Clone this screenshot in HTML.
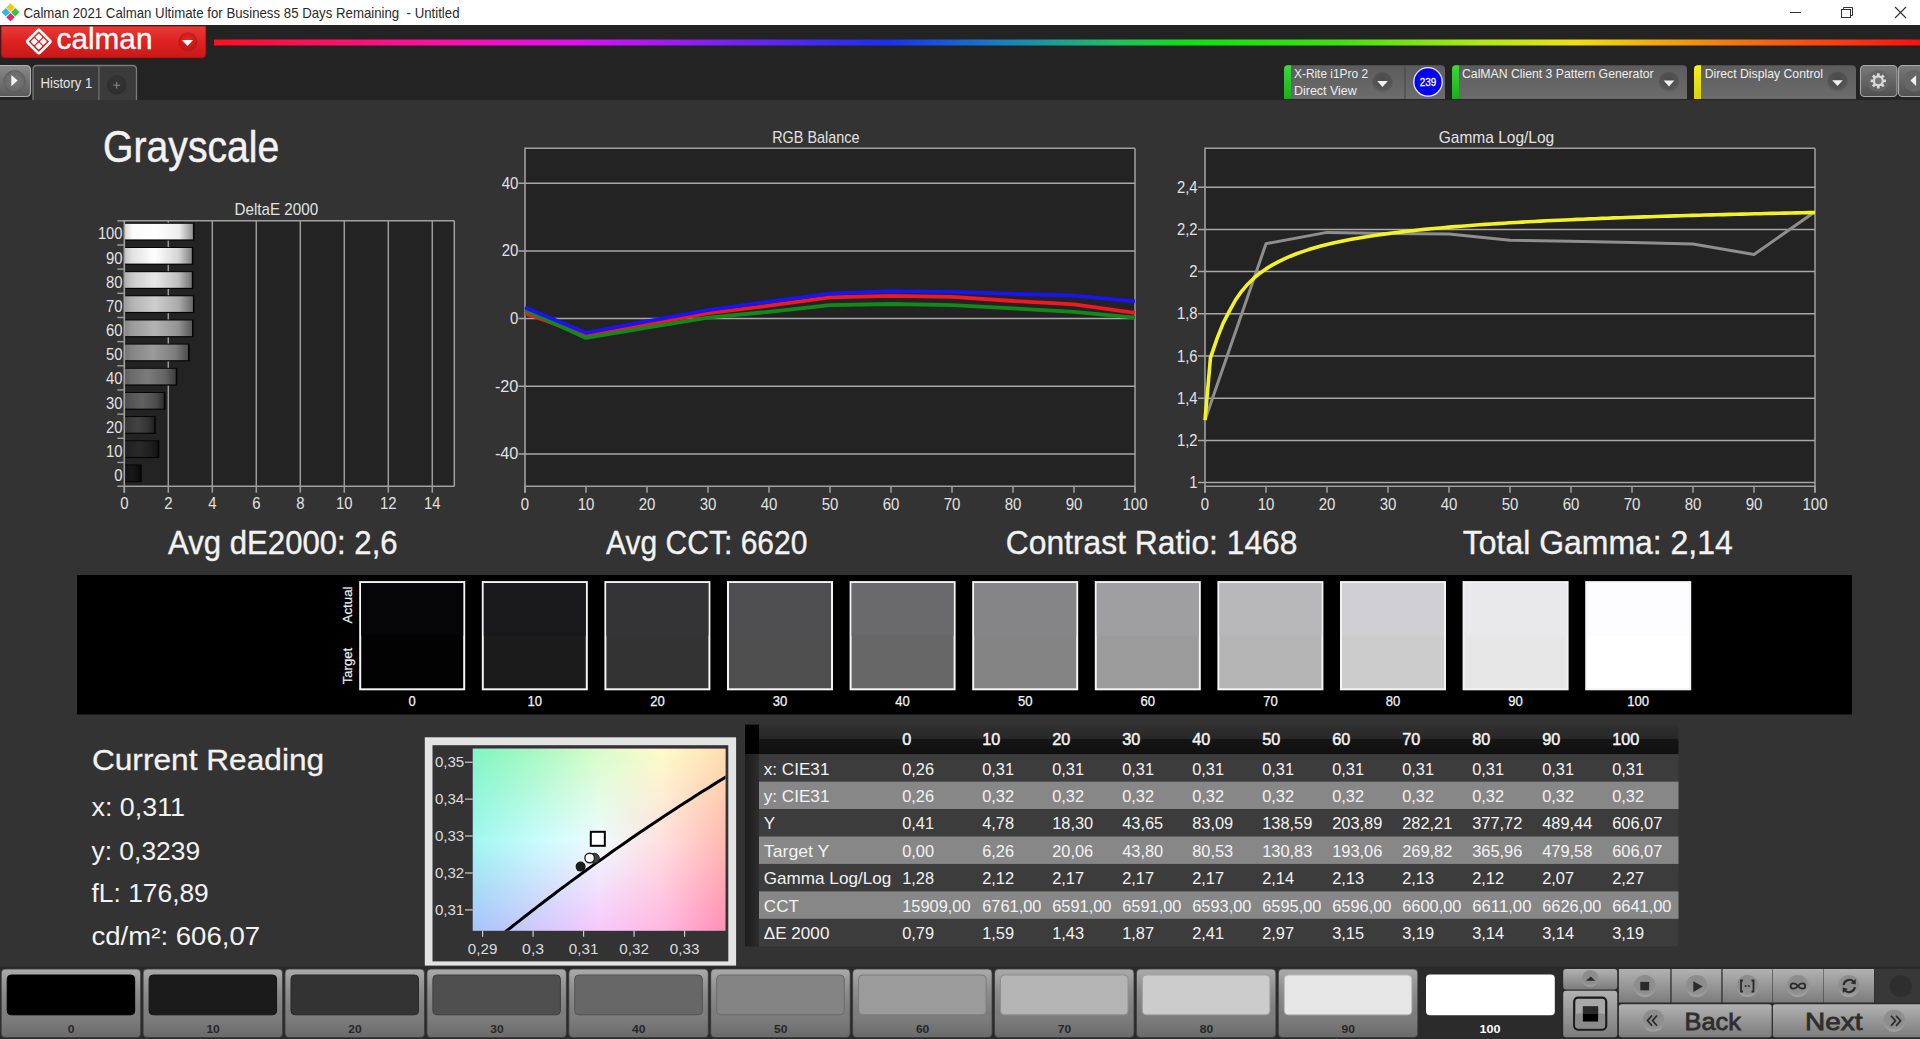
<!DOCTYPE html><html><head><meta charset="utf-8"><title>Calman Grayscale</title><style>html,body{margin:0;padding:0;background:#333;overflow:hidden;width:1920px;height:1039px;}svg{display:block;font-family:"Liberation Sans",sans-serif;}</style></head><body><svg width="1920" height="1039" viewBox="0 0 1920 1039" font-family="'Liberation Sans', sans-serif"><defs><linearGradient id="gRed" x1="0" y1="0" x2="0" y2="1"><stop offset="0" stop-color="#e83a36"/><stop offset="0.5" stop-color="#de2222"/><stop offset="1" stop-color="#c81818"/></linearGradient><radialGradient id="gRedBtn" cx="0.5" cy="0.4" r="0.6"><stop offset="0" stop-color="#e02a2a"/><stop offset="1" stop-color="#b81414"/></radialGradient><linearGradient id="gRain" x1="214" y1="0" x2="1920" y2="0" gradientUnits="userSpaceOnUse"><stop offset="0" stop-color="#ff1020"/><stop offset="0.126" stop-color="#ff10a0"/><stop offset="0.21" stop-color="#e010f0"/><stop offset="0.294" stop-color="#8020f0"/><stop offset="0.395" stop-color="#1830f0"/><stop offset="0.462" stop-color="#1880c0"/><stop offset="0.529" stop-color="#20c060"/><stop offset="0.573" stop-color="#10e010"/><stop offset="0.66" stop-color="#40e010"/><stop offset="0.743" stop-color="#b0e818"/><stop offset="0.798" stop-color="#f0e010"/><stop offset="0.882" stop-color="#f08010"/><stop offset="1" stop-color="#ff1010"/></linearGradient><linearGradient id="gPlay" x1="0" y1="0" x2="0" y2="1"><stop offset="0" stop-color="#8a8a8a"/><stop offset="1" stop-color="#5a5a5a"/></linearGradient><radialGradient id="gPlayC" cx="0.5" cy="0.5" r="0.5"><stop offset="0" stop-color="#7a7a7a"/><stop offset="0.85" stop-color="#6a6a6a"/><stop offset="1" stop-color="#5a5a5a"/></radialGradient><radialGradient id="gPlus" cx="0.5" cy="0.4" r="0.55"><stop offset="0" stop-color="#363636"/><stop offset="1" stop-color="#2e2e2e"/></radialGradient><linearGradient id="gBox" x1="0" y1="0" x2="0" y2="1"><stop offset="0" stop-color="#5c5c5c"/><stop offset="1" stop-color="#6c6c6c"/></linearGradient><linearGradient id="gGreen" x1="0" y1="0" x2="0" y2="1"><stop offset="0" stop-color="#3ad83a"/><stop offset="1" stop-color="#18b018"/></linearGradient><linearGradient id="gYel" x1="0" y1="0" x2="0" y2="1"><stop offset="0" stop-color="#f4f020"/><stop offset="1" stop-color="#d8d010"/></linearGradient><radialGradient id="gDrop" cx="0.5" cy="0.35" r="0.6"><stop offset="0" stop-color="#4a4a4a"/><stop offset="0.8" stop-color="#555"/><stop offset="1" stop-color="#626262"/></radialGradient><linearGradient id="gGearB" x1="0" y1="0" x2="0" y2="1"><stop offset="0" stop-color="#7a7a7a"/><stop offset="1" stop-color="#505050"/></linearGradient><linearGradient id="gBar0" x1="0" y1="0" x2="1" y2="0"><stop offset="0" stop-color="#141414"/><stop offset="0.12" stop-color="#131313"/><stop offset="0.45" stop-color="#191919"/><stop offset="0.8" stop-color="#111111"/><stop offset="1" stop-color="#0b0b0b"/></linearGradient><linearGradient id="gBar1" x1="0" y1="0" x2="1" y2="0"><stop offset="0" stop-color="#202020"/><stop offset="0.12" stop-color="#222222"/><stop offset="0.45" stop-color="#292929"/><stop offset="0.8" stop-color="#1e1e1e"/><stop offset="1" stop-color="#131313"/></linearGradient><linearGradient id="gBar2" x1="0" y1="0" x2="1" y2="0"><stop offset="0" stop-color="#333333"/><stop offset="0.12" stop-color="#383838"/><stop offset="0.45" stop-color="#434343"/><stop offset="0.8" stop-color="#343434"/><stop offset="1" stop-color="#202020"/></linearGradient><linearGradient id="gBar3" x1="0" y1="0" x2="1" y2="0"><stop offset="0" stop-color="#494949"/><stop offset="0.12" stop-color="#535353"/><stop offset="0.45" stop-color="#616161"/><stop offset="0.8" stop-color="#4d4d4d"/><stop offset="1" stop-color="#2f2f2f"/></linearGradient><linearGradient id="gBar4" x1="0" y1="0" x2="1" y2="0"><stop offset="0" stop-color="#5c5c5c"/><stop offset="0.12" stop-color="#6a6a6a"/><stop offset="0.45" stop-color="#7b7b7b"/><stop offset="0.8" stop-color="#636363"/><stop offset="1" stop-color="#3d3d3d"/></linearGradient><linearGradient id="gBar5" x1="0" y1="0" x2="1" y2="0"><stop offset="0" stop-color="#747474"/><stop offset="0.12" stop-color="#858585"/><stop offset="0.45" stop-color="#9b9b9b"/><stop offset="0.8" stop-color="#7d7d7d"/><stop offset="1" stop-color="#4d4d4d"/></linearGradient><linearGradient id="gBar6" x1="0" y1="0" x2="1" y2="0"><stop offset="0" stop-color="#868686"/><stop offset="0.12" stop-color="#9b9b9b"/><stop offset="0.45" stop-color="#b3b3b3"/><stop offset="0.8" stop-color="#929292"/><stop offset="1" stop-color="#595959"/></linearGradient><linearGradient id="gBar7" x1="0" y1="0" x2="1" y2="0"><stop offset="0" stop-color="#9a9a9a"/><stop offset="0.12" stop-color="#b3b3b3"/><stop offset="0.45" stop-color="#cecece"/><stop offset="0.8" stop-color="#a8a8a8"/><stop offset="1" stop-color="#676767"/></linearGradient><linearGradient id="gBar8" x1="0" y1="0" x2="1" y2="0"><stop offset="0" stop-color="#adadad"/><stop offset="0.12" stop-color="#cacaca"/><stop offset="0.45" stop-color="#e8e8e8"/><stop offset="0.8" stop-color="#bebebe"/><stop offset="1" stop-color="#747474"/></linearGradient><linearGradient id="gBar9" x1="0" y1="0" x2="1" y2="0"><stop offset="0" stop-color="#c2c2c2"/><stop offset="0.12" stop-color="#e2e2e2"/><stop offset="0.45" stop-color="#ffffff"/><stop offset="0.8" stop-color="#d5d5d5"/><stop offset="1" stop-color="#828282"/></linearGradient><linearGradient id="gBar10" x1="0" y1="0" x2="1" y2="0"><stop offset="0" stop-color="#d6d6d6"/><stop offset="0.12" stop-color="#fafafa"/><stop offset="0.45" stop-color="#ffffff"/><stop offset="0.8" stop-color="#ececec"/><stop offset="1" stop-color="#909090"/></linearGradient><linearGradient id="cT" x1="0" y1="0" x2="1" y2="0"><stop offset="0.00" stop-color="#80f5c0"/><stop offset="0.25" stop-color="#a8f8c0"/><stop offset="0.50" stop-color="#d8fcc8"/><stop offset="0.75" stop-color="#fcfcc8"/><stop offset="1.00" stop-color="#fde0b0"/></linearGradient><linearGradient id="cM" x1="0" y1="0" x2="1" y2="0"><stop offset="0.00" stop-color="#a0f8f0"/><stop offset="0.25" stop-color="#c8fcfc"/><stop offset="0.50" stop-color="#eefcff"/><stop offset="0.75" stop-color="#ffe0e0"/><stop offset="1.00" stop-color="#ffb8b0"/></linearGradient><linearGradient id="cB" x1="0" y1="0" x2="1" y2="0"><stop offset="0.00" stop-color="#a8c4fc"/><stop offset="0.25" stop-color="#d0c8fc"/><stop offset="0.50" stop-color="#f8c8fc"/><stop offset="0.75" stop-color="#ffb8e0"/><stop offset="1.00" stop-color="#ff90b8"/></linearGradient><linearGradient id="mTop" x1="0" y1="0" x2="0" y2="1"><stop offset="0" stop-color="#fff"/><stop offset="0.5" stop-color="#000"/><stop offset="1" stop-color="#000"/></linearGradient><linearGradient id="mMid" x1="0" y1="0" x2="0" y2="1"><stop offset="0" stop-color="#fff"/><stop offset="0.5" stop-color="#fff"/><stop offset="1" stop-color="#000"/></linearGradient><mask id="mkTop" maskUnits="userSpaceOnUse" x="472.7" y="748.5" width="252.8" height="182.29999999999995"><rect x="472.7" y="748.5" width="252.8" height="182.29999999999995" fill="url(#mTop)"/></mask><mask id="mkMid" maskUnits="userSpaceOnUse" x="472.7" y="748.5" width="252.8" height="182.29999999999995"><rect x="472.7" y="748.5" width="252.8" height="182.29999999999995" fill="url(#mMid)"/></mask><clipPath id="cpCie"><rect x="472.7" y="748.5" width="252.8" height="182.29999999999995"/></clipPath><linearGradient id="gHdr" x1="0" y1="0" x2="0" y2="1"><stop offset="0" stop-color="#303030"/><stop offset="0.5" stop-color="#272727"/><stop offset="0.5" stop-color="#151515"/><stop offset="1" stop-color="#101010"/></linearGradient><linearGradient id="gRH" x1="0" y1="0" x2="1" y2="0"><stop offset="0" stop-color="#1c1c1c"/><stop offset="1" stop-color="#2c2c2c"/></linearGradient><linearGradient id="gBtn" x1="0" y1="0" x2="0" y2="1"><stop offset="0" stop-color="#ababab"/><stop offset="0.3" stop-color="#8e8e8e"/><stop offset="0.65" stop-color="#7c7c7c"/><stop offset="0.7" stop-color="#7e7e7e"/><stop offset="1" stop-color="#6a6a6a"/></linearGradient><linearGradient id="gCtl" x1="0" y1="0" x2="0" y2="1"><stop offset="0" stop-color="#b2b2b2"/><stop offset="1" stop-color="#7c7c7c"/></linearGradient><radialGradient id="gIco" cx="0.5" cy="0.35" r="0.65"><stop offset="0" stop-color="#8a8a8a"/><stop offset="0.75" stop-color="#8f8f8f"/><stop offset="1" stop-color="#a6a6a6"/></radialGradient></defs><rect x="0" y="0" width="1920" height="1039" fill="#333333"/>
<rect x="0" y="0" width="1920" height="25" fill="#ffffff"/>
<rect x="0" y="25" width="1920" height="75" fill="#232323"/>
<path d="M10.5 3.2 L14.8 7.5 L10.5 11.8 L6.2 7.5 Z" fill="#f5c518"/>
<path d="M5.8 8.0 L10.1 12.3 L5.8 16.6 L1.5 12.3 Z" fill="#2fb5e8"/>
<path d="M15.3 8.0 L19.6 12.3 L15.3 16.6 L11.0 12.3 Z" fill="#3cc43c"/>
<path d="M10.5 12.899999999999999 L14.8 17.2 L10.5 21.5 L6.2 17.2 Z" fill="#e0306a"/>
<text x="23.5" y="17.8" font-size="14.3" fill="#2a2a2a" textLength="436.0" lengthAdjust="spacingAndGlyphs">Calman 2021 Calman Ultimate for Business 85 Days Remaining&#160;&#160;- Untitled</text>
<line x1="1790" y1="12.5" x2="1801" y2="12.5" stroke="#333" stroke-width="1"/>
<rect x="1841.5" y="9.5" width="9" height="8" fill="none" stroke="#333" stroke-width="1"/>
<path d="M1843.5 9.5 V7.5 H1852.5 V15.5 H1850.5" fill="none" stroke="#333" stroke-width="1"/>
<line x1="1895" y1="7" x2="1906" y2="18" stroke="#333" stroke-width="1.1"/>
<line x1="1906" y1="7" x2="1895" y2="18" stroke="#333" stroke-width="1.1"/>
<path d="M1 26 H206 V54 Q206 58 202 58 H5 Q1 58 1 54 Z" fill="url(#gRed)" stroke="#7a1010" stroke-width="0.8"/>
<g transform="translate(38.8,41.6) rotate(45)"><rect x="-8.6" y="-8.6" width="17.2" height="17.2" rx="1.6" fill="none" stroke="#fff" stroke-width="2.6"/><rect x="-5.8" y="-5.8" width="5.2" height="5.2" rx="0.8" fill="#fff"/><rect x="0.6" y="-5.8" width="5.2" height="5.2" rx="0.8" fill="#fff"/><rect x="-5.8" y="0.6" width="5.2" height="5.2" rx="0.8" fill="#fff"/><rect x="0.6" y="0.6" width="5.2" height="5.2" rx="0.8" fill="#fff"/></g>
<text x="56.5" y="49.2" font-size="30" fill="#ffffff" textLength="96.0" lengthAdjust="spacingAndGlyphs" stroke="#fff" stroke-width="0.35">calman</text>
<circle cx="187.9" cy="41.8" r="9.5" fill="url(#gRedBtn)"/>
<path d="M182 40 H193 L187.5 46 Z" fill="#fff"/>
<rect x="214" y="39.5" width="1706" height="6" fill="url(#gRain)"/>
<path d="M-2 65.5 H26 Q30.5 65.5 30.5 70 V92 Q30.5 96.5 26 96.5 H-2 Z" fill="url(#gPlay)" stroke="#b0b0b0" stroke-width="1.2"/>
<circle cx="14.6" cy="81.2" r="11" fill="url(#gPlayC)"/>
<path d="M11.3 75 L17.6 80.6 L11.3 86.3 Z" fill="#f4f4f4"/>
<path d="M33 100 V69.5 Q33 65.5 37 65.5 H132.5 Q136.5 65.5 136.5 69.5 V100" fill="#3b3b3b" stroke="#7a7a7a" stroke-width="1.3"/>
<line x1="98.9" y1="66" x2="98.9" y2="100" stroke="#6e6e6e" stroke-width="1.3"/>
<circle cx="116.7" cy="84.8" r="9.8" fill="url(#gPlus)"/>
<line x1="113.4" y1="85.2" x2="120" y2="85.2" stroke="#8a8a8a" stroke-width="1"/>
<line x1="116.7" y1="81.9" x2="116.7" y2="88.5" stroke="#8a8a8a" stroke-width="1"/>
<text x="40.5" y="87.7" font-size="13.8" fill="#e6e6e6" textLength="51.8" lengthAdjust="spacingAndGlyphs">History 1</text>
<path d="M1284 99 V69.5 Q1284 65.3 1288 65.3 H1441 Q1445 65.3 1445 69.5 V99 Z" fill="url(#gBox)"/>
<path d="M1284 99 V69.5 Q1284 65.3 1288 65.3 H1291 V99 Z" fill="url(#gGreen)"/>
<line x1="1405" y1="67" x2="1405" y2="99" stroke="#4a4a4a" stroke-width="1.2"/>
<circle cx="1382.5" cy="82.5" r="10.2" fill="url(#gDrop)"/>
<path d="M1377.2 81.1 H1387.8 L1382.5 86.9 Z" fill="#f2f2f2"/>
<circle cx="1428" cy="81.9" r="14.2" fill="#0404f0" stroke="#e8e8ff" stroke-width="1.3"/>
<text x="1428.0" y="86.3" font-size="11.5" fill="#ffffff" text-anchor="middle" textLength="16.5" lengthAdjust="spacingAndGlyphs" stroke="#fff" stroke-width="0.3">239</text>
<text x="1294.0" y="78.2" font-size="12.2" fill="#eeeeee" textLength="74.0" lengthAdjust="spacingAndGlyphs">X-Rite i1Pro 2</text>
<text x="1294.0" y="94.9" font-size="12.2" fill="#eeeeee" textLength="62.8" lengthAdjust="spacingAndGlyphs">Direct View</text>
<path d="M1452 99 V69.5 Q1452 65.3 1456 65.3 H1683 Q1687 65.3 1687 69.5 V99 Z" fill="url(#gBox)"/>
<path d="M1452 99 V69.5 Q1452 65.3 1456 65.3 H1459 V99 Z" fill="url(#gGreen)"/>
<circle cx="1669" cy="82" r="10.2" fill="url(#gDrop)"/>
<path d="M1663.7 80.6 H1674.3 L1669 86.4 Z" fill="#f2f2f2"/>
<text x="1462.0" y="78.2" font-size="12.2" fill="#eeeeee" textLength="191.7" lengthAdjust="spacingAndGlyphs">CalMAN Client 3 Pattern Generator</text>
<path d="M1694 99 V69.5 Q1694 65.3 1698 65.3 H1852 Q1856 65.3 1856 69.5 V99 Z" fill="url(#gBox)"/>
<path d="M1694 99 V69.5 Q1694 65.3 1698 65.3 H1701 V99 Z" fill="url(#gYel)"/>
<circle cx="1837.5" cy="81.7" r="10.2" fill="url(#gDrop)"/>
<path d="M1832.2 80.3 H1842.8 L1837.5 86.10000000000001 Z" fill="#f2f2f2"/>
<text x="1704.7" y="78.3" font-size="12.2" fill="#eeeeee" textLength="118.3" lengthAdjust="spacingAndGlyphs">Direct Display Control</text>
<rect x="1860.5" y="65.5" width="36.5" height="31" rx="4" fill="url(#gGearB)" stroke="#a8a8a8" stroke-width="1.1"/>
<circle cx="1878.3" cy="80.9" r="10.9" fill="#666666"/>
<path d="M1883.71 79.46 L1885.99 79.58 L1885.99 82.22 L1883.71 82.34 L1883.14 83.71 L1884.67 85.40 L1882.80 87.27 L1881.11 85.74 L1879.74 86.31 L1879.62 88.59 L1876.98 88.59 L1876.86 86.31 L1875.49 85.74 L1873.80 87.27 L1871.93 85.40 L1873.46 83.71 L1872.89 82.34 L1870.61 82.22 L1870.61 79.58 L1872.89 79.46 L1873.46 78.09 L1871.93 76.40 L1873.80 74.53 L1875.49 76.06 L1876.86 75.49 L1876.98 73.21 L1879.62 73.21 L1879.74 75.49 L1881.11 76.06 L1882.80 74.53 L1884.67 76.40 L1883.14 78.09 Z" fill="#d8d8d8"/>
<circle cx="1878.3" cy="80.9" r="3.3" fill="#767676"/>
<rect x="1898.5" y="65.5" width="30" height="31" rx="4" fill="url(#gGearB)" stroke="#a8a8a8" stroke-width="1.1"/>
<circle cx="1914.5" cy="80.9" r="10.9" fill="#666666"/>
<path d="M1916.1 75.2 L1910.4 80.6 L1916.1 85.9 Z" fill="#f0f0f0"/>
<text x="103.1" y="162.3" font-size="43.6" fill="#f2f2f2" textLength="176.2" lengthAdjust="spacingAndGlyphs" stroke="#f2f2f2" stroke-width="0.5">Grayscale</text>
<rect x="124.3" y="220.8" width="330.0" height="265.4" fill="#232323"/>
<line x1="168.3" y1="220.8" x2="168.3" y2="486.2" stroke="#9a9a9a" stroke-width="1.5"/>
<line x1="212.3" y1="220.8" x2="212.3" y2="486.2" stroke="#9a9a9a" stroke-width="1.5"/>
<line x1="256.3" y1="220.8" x2="256.3" y2="486.2" stroke="#9a9a9a" stroke-width="1.5"/>
<line x1="300.3" y1="220.8" x2="300.3" y2="486.2" stroke="#9a9a9a" stroke-width="1.5"/>
<line x1="344.3" y1="220.8" x2="344.3" y2="486.2" stroke="#9a9a9a" stroke-width="1.5"/>
<line x1="388.3" y1="220.8" x2="388.3" y2="486.2" stroke="#9a9a9a" stroke-width="1.5"/>
<line x1="432.3" y1="220.8" x2="432.3" y2="486.2" stroke="#9a9a9a" stroke-width="1.5"/>
<text x="276.3" y="215.4" font-size="15.7" fill="#e2e2e2" text-anchor="middle" textLength="83.6" lengthAdjust="spacingAndGlyphs">DeltaE 2000</text>
<rect x="124.3" y="464.4" width="17.4" height="17.8" fill="#050505"/>
<rect x="124.3" y="465.4" width="15.8" height="15.6" fill="url(#gBar0)"/>
<text x="122.6" y="481.0" font-size="16" fill="#e2e2e2" text-anchor="end" textLength="8.3" lengthAdjust="spacingAndGlyphs">0</text>
<rect x="124.3" y="440.3" width="35.0" height="17.8" fill="#050505"/>
<rect x="124.3" y="441.3" width="33.4" height="15.6" fill="url(#gBar1)"/>
<text x="122.6" y="456.9" font-size="16" fill="#e2e2e2" text-anchor="end" textLength="16.5" lengthAdjust="spacingAndGlyphs">10</text>
<rect x="124.3" y="416.1" width="31.5" height="17.8" fill="#050505"/>
<rect x="124.3" y="417.1" width="29.9" height="15.6" fill="url(#gBar2)"/>
<text x="122.6" y="432.7" font-size="16" fill="#e2e2e2" text-anchor="end" textLength="16.5" lengthAdjust="spacingAndGlyphs">20</text>
<rect x="124.3" y="392.0" width="41.1" height="17.8" fill="#050505"/>
<rect x="124.3" y="393.0" width="39.5" height="15.6" fill="url(#gBar3)"/>
<text x="122.6" y="408.6" font-size="16" fill="#e2e2e2" text-anchor="end" textLength="16.5" lengthAdjust="spacingAndGlyphs">30</text>
<rect x="124.3" y="367.8" width="53.0" height="17.8" fill="#050505"/>
<rect x="124.3" y="368.8" width="51.4" height="15.6" fill="url(#gBar4)"/>
<text x="122.6" y="384.4" font-size="16" fill="#e2e2e2" text-anchor="end" textLength="16.5" lengthAdjust="spacingAndGlyphs">40</text>
<rect x="124.3" y="343.6" width="65.3" height="17.8" fill="#050505"/>
<rect x="124.3" y="344.6" width="63.7" height="15.6" fill="url(#gBar5)"/>
<text x="122.6" y="360.2" font-size="16" fill="#e2e2e2" text-anchor="end" textLength="16.5" lengthAdjust="spacingAndGlyphs">50</text>
<rect x="124.3" y="319.5" width="69.3" height="17.8" fill="#050505"/>
<rect x="124.3" y="320.5" width="67.7" height="15.6" fill="url(#gBar6)"/>
<text x="122.6" y="336.1" font-size="16" fill="#e2e2e2" text-anchor="end" textLength="16.5" lengthAdjust="spacingAndGlyphs">60</text>
<rect x="124.3" y="295.3" width="70.2" height="17.8" fill="#050505"/>
<rect x="124.3" y="296.3" width="68.6" height="15.6" fill="url(#gBar7)"/>
<text x="122.6" y="311.9" font-size="16" fill="#e2e2e2" text-anchor="end" textLength="16.5" lengthAdjust="spacingAndGlyphs">70</text>
<rect x="124.3" y="271.2" width="69.1" height="17.8" fill="#050505"/>
<rect x="124.3" y="272.2" width="67.5" height="15.6" fill="url(#gBar8)"/>
<text x="122.6" y="287.8" font-size="16" fill="#e2e2e2" text-anchor="end" textLength="16.5" lengthAdjust="spacingAndGlyphs">80</text>
<rect x="124.3" y="247.0" width="69.1" height="17.8" fill="#050505"/>
<rect x="124.3" y="248.0" width="67.5" height="15.6" fill="url(#gBar9)"/>
<text x="122.6" y="263.6" font-size="16" fill="#e2e2e2" text-anchor="end" textLength="16.5" lengthAdjust="spacingAndGlyphs">90</text>
<rect x="124.3" y="222.8" width="70.2" height="17.8" fill="#050505"/>
<rect x="124.3" y="223.8" width="68.6" height="15.6" fill="url(#gBar10)"/>
<text x="122.6" y="239.4" font-size="16" fill="#e2e2e2" text-anchor="end" textLength="24.7" lengthAdjust="spacingAndGlyphs">100</text>
<line x1="124.3" y1="220.8" x2="454.3" y2="220.8" stroke="#a0a0a0" stroke-width="1.5"/>
<line x1="454.3" y1="220.8" x2="454.3" y2="486.2" stroke="#a0a0a0" stroke-width="1.5"/>
<line x1="124.3" y1="220.10000000000002" x2="124.3" y2="492.7" stroke="#a0a0a0" stroke-width="1.6"/>
<line x1="117.3" y1="486.2" x2="454.3" y2="486.2" stroke="#a0a0a0" stroke-width="1.6"/>
<line x1="117.3" y1="220.84" x2="124.3" y2="220.84" stroke="#a0a0a0" stroke-width="1.4"/>
<line x1="117.3" y1="245.0" x2="124.3" y2="245.0" stroke="#a0a0a0" stroke-width="1.4"/>
<line x1="117.3" y1="269.16" x2="124.3" y2="269.16" stroke="#a0a0a0" stroke-width="1.4"/>
<line x1="117.3" y1="293.32" x2="124.3" y2="293.32" stroke="#a0a0a0" stroke-width="1.4"/>
<line x1="117.3" y1="317.48" x2="124.3" y2="317.48" stroke="#a0a0a0" stroke-width="1.4"/>
<line x1="117.3" y1="341.64" x2="124.3" y2="341.64" stroke="#a0a0a0" stroke-width="1.4"/>
<line x1="117.3" y1="365.8" x2="124.3" y2="365.8" stroke="#a0a0a0" stroke-width="1.4"/>
<line x1="117.3" y1="389.96000000000004" x2="124.3" y2="389.96000000000004" stroke="#a0a0a0" stroke-width="1.4"/>
<line x1="117.3" y1="414.12" x2="124.3" y2="414.12" stroke="#a0a0a0" stroke-width="1.4"/>
<line x1="117.3" y1="438.28" x2="124.3" y2="438.28" stroke="#a0a0a0" stroke-width="1.4"/>
<line x1="117.3" y1="462.44" x2="124.3" y2="462.44" stroke="#a0a0a0" stroke-width="1.4"/>
<line x1="124.3" y1="486.2" x2="124.3" y2="492.7" stroke="#a0a0a0" stroke-width="1.5"/>
<text x="124.3" y="509.4" font-size="16" fill="#e2e2e2" text-anchor="middle" textLength="8.3" lengthAdjust="spacingAndGlyphs">0</text>
<line x1="168.3" y1="486.2" x2="168.3" y2="492.7" stroke="#a0a0a0" stroke-width="1.5"/>
<text x="168.3" y="509.4" font-size="16" fill="#e2e2e2" text-anchor="middle" textLength="8.3" lengthAdjust="spacingAndGlyphs">2</text>
<line x1="212.3" y1="486.2" x2="212.3" y2="492.7" stroke="#a0a0a0" stroke-width="1.5"/>
<text x="212.3" y="509.4" font-size="16" fill="#e2e2e2" text-anchor="middle" textLength="8.3" lengthAdjust="spacingAndGlyphs">4</text>
<line x1="256.3" y1="486.2" x2="256.3" y2="492.7" stroke="#a0a0a0" stroke-width="1.5"/>
<text x="256.3" y="509.4" font-size="16" fill="#e2e2e2" text-anchor="middle" textLength="8.3" lengthAdjust="spacingAndGlyphs">6</text>
<line x1="300.3" y1="486.2" x2="300.3" y2="492.7" stroke="#a0a0a0" stroke-width="1.5"/>
<text x="300.3" y="509.4" font-size="16" fill="#e2e2e2" text-anchor="middle" textLength="8.3" lengthAdjust="spacingAndGlyphs">8</text>
<line x1="344.3" y1="486.2" x2="344.3" y2="492.7" stroke="#a0a0a0" stroke-width="1.5"/>
<text x="344.3" y="509.4" font-size="16" fill="#e2e2e2" text-anchor="middle" textLength="16.5" lengthAdjust="spacingAndGlyphs">10</text>
<line x1="388.3" y1="486.2" x2="388.3" y2="492.7" stroke="#a0a0a0" stroke-width="1.5"/>
<text x="388.3" y="509.4" font-size="16" fill="#e2e2e2" text-anchor="middle" textLength="16.5" lengthAdjust="spacingAndGlyphs">12</text>
<line x1="432.3" y1="486.2" x2="432.3" y2="492.7" stroke="#a0a0a0" stroke-width="1.5"/>
<text x="432.3" y="509.4" font-size="16" fill="#e2e2e2" text-anchor="middle" textLength="16.5" lengthAdjust="spacingAndGlyphs">14</text>
<rect x="525.0" y="148.3" width="610.0" height="337.9" fill="#232323"/>
<text x="815.8" y="142.8" font-size="15.7" fill="#e2e2e2" text-anchor="middle" textLength="87.2" lengthAdjust="spacingAndGlyphs">RGB Balance</text>
<line x1="518.5" y1="183.20000000000005" x2="1135.0" y2="183.20000000000005" stroke="#a8a8a8" stroke-width="1.5"/>
<text x="518.4" y="188.6" font-size="16" fill="#e2e2e2" text-anchor="end" textLength="16.7" lengthAdjust="spacingAndGlyphs">40</text>
<line x1="518.5" y1="250.90000000000003" x2="1135.0" y2="250.90000000000003" stroke="#a8a8a8" stroke-width="1.5"/>
<text x="518.4" y="256.3" font-size="16" fill="#e2e2e2" text-anchor="end" textLength="16.7" lengthAdjust="spacingAndGlyphs">20</text>
<line x1="518.5" y1="318.6" x2="1135.0" y2="318.6" stroke="#a8a8a8" stroke-width="1.5"/>
<text x="518.4" y="324.0" font-size="16" fill="#e2e2e2" text-anchor="end" textLength="8.3" lengthAdjust="spacingAndGlyphs">0</text>
<line x1="518.5" y1="386.3" x2="1135.0" y2="386.3" stroke="#a8a8a8" stroke-width="1.5"/>
<text x="518.4" y="391.7" font-size="16" fill="#e2e2e2" text-anchor="end" textLength="23.5" lengthAdjust="spacingAndGlyphs">-20</text>
<line x1="518.5" y1="454.0" x2="1135.0" y2="454.0" stroke="#a8a8a8" stroke-width="1.5"/>
<text x="518.4" y="459.4" font-size="16" fill="#e2e2e2" text-anchor="end" textLength="23.5" lengthAdjust="spacingAndGlyphs">-40</text>
<line x1="525.0" y1="148.3" x2="1135.0" y2="148.3" stroke="#a0a0a0" stroke-width="1.5"/>
<line x1="1135.0" y1="148.3" x2="1135.0" y2="492.7" stroke="#a0a0a0" stroke-width="1.5"/>
<line x1="525.0" y1="147.60000000000002" x2="525.0" y2="492.7" stroke="#a0a0a0" stroke-width="1.6"/>
<line x1="525.0" y1="486.2" x2="1135.0" y2="486.2" stroke="#a0a0a0" stroke-width="1.6"/>
<line x1="525.0" y1="486.2" x2="525.0" y2="492.7" stroke="#a0a0a0" stroke-width="1.5"/>
<text x="525.0" y="509.7" font-size="16" fill="#e2e2e2" text-anchor="middle" textLength="8.3" lengthAdjust="spacingAndGlyphs">0</text>
<line x1="586.0" y1="486.2" x2="586.0" y2="492.7" stroke="#a0a0a0" stroke-width="1.5"/>
<text x="586.0" y="509.7" font-size="16" fill="#e2e2e2" text-anchor="middle" textLength="16.7" lengthAdjust="spacingAndGlyphs">10</text>
<line x1="647.0" y1="486.2" x2="647.0" y2="492.7" stroke="#a0a0a0" stroke-width="1.5"/>
<text x="647.0" y="509.7" font-size="16" fill="#e2e2e2" text-anchor="middle" textLength="16.7" lengthAdjust="spacingAndGlyphs">20</text>
<line x1="708.0" y1="486.2" x2="708.0" y2="492.7" stroke="#a0a0a0" stroke-width="1.5"/>
<text x="708.0" y="509.7" font-size="16" fill="#e2e2e2" text-anchor="middle" textLength="16.7" lengthAdjust="spacingAndGlyphs">30</text>
<line x1="769.0" y1="486.2" x2="769.0" y2="492.7" stroke="#a0a0a0" stroke-width="1.5"/>
<text x="769.0" y="509.7" font-size="16" fill="#e2e2e2" text-anchor="middle" textLength="16.7" lengthAdjust="spacingAndGlyphs">40</text>
<line x1="830.0" y1="486.2" x2="830.0" y2="492.7" stroke="#a0a0a0" stroke-width="1.5"/>
<text x="830.0" y="509.7" font-size="16" fill="#e2e2e2" text-anchor="middle" textLength="16.7" lengthAdjust="spacingAndGlyphs">50</text>
<line x1="891.0" y1="486.2" x2="891.0" y2="492.7" stroke="#a0a0a0" stroke-width="1.5"/>
<text x="891.0" y="509.7" font-size="16" fill="#e2e2e2" text-anchor="middle" textLength="16.7" lengthAdjust="spacingAndGlyphs">60</text>
<line x1="952.0" y1="486.2" x2="952.0" y2="492.7" stroke="#a0a0a0" stroke-width="1.5"/>
<text x="952.0" y="509.7" font-size="16" fill="#e2e2e2" text-anchor="middle" textLength="16.7" lengthAdjust="spacingAndGlyphs">70</text>
<line x1="1013.0" y1="486.2" x2="1013.0" y2="492.7" stroke="#a0a0a0" stroke-width="1.5"/>
<text x="1013.0" y="509.7" font-size="16" fill="#e2e2e2" text-anchor="middle" textLength="16.7" lengthAdjust="spacingAndGlyphs">80</text>
<line x1="1074.0" y1="486.2" x2="1074.0" y2="492.7" stroke="#a0a0a0" stroke-width="1.5"/>
<text x="1074.0" y="509.7" font-size="16" fill="#e2e2e2" text-anchor="middle" textLength="16.7" lengthAdjust="spacingAndGlyphs">90</text>
<line x1="1135.0" y1="486.2" x2="1135.0" y2="492.7" stroke="#a0a0a0" stroke-width="1.5"/>
<text x="1135.0" y="509.7" font-size="16" fill="#e2e2e2" text-anchor="middle" textLength="25.0" lengthAdjust="spacingAndGlyphs">100</text>
<polyline points="525.0,313.2 586.0,335.2 647.0,324.4 708.0,313.2 769.0,305.7 830.0,297.3 891.0,295.9 952.0,296.9 1013.0,301.0 1074.0,304.4 1135.0,312.8" fill="none" stroke="#f01822" stroke-width="3.8" stroke-linejoin="round"/>
<polyline points="525.0,310.1 586.0,337.9 647.0,327.7 708.0,317.6 769.0,311.8 830.0,305.1 891.0,304.0 952.0,305.1 1013.0,308.4 1074.0,311.8 1135.0,317.6" fill="none" stroke="#128a1a" stroke-width="3.8" stroke-linejoin="round"/>
<polyline points="525.0,307.4 586.0,332.8 647.0,321.3 708.0,310.1 769.0,301.7 830.0,293.6 891.0,291.2 952.0,291.9 1013.0,293.9 1074.0,295.6 1135.0,301.3" fill="none" stroke="#1a14f2" stroke-width="3.8" stroke-linejoin="round"/>
<rect x="1205.0" y="148.3" width="610.0" height="337.9" fill="#232323"/>
<text x="1496.5" y="142.8" font-size="15.7" fill="#e2e2e2" text-anchor="middle" textLength="115.5" lengthAdjust="spacingAndGlyphs">Gamma Log/Log</text>
<line x1="1198.0" y1="482.6" x2="1815.0" y2="482.6" stroke="#a8a8a8" stroke-width="1.5"/>
<text x="1197.6" y="488.1" font-size="16" fill="#e2e2e2" text-anchor="end" textLength="8.3" lengthAdjust="spacingAndGlyphs">1</text>
<line x1="1198.0" y1="440.40000000000003" x2="1815.0" y2="440.40000000000003" stroke="#a8a8a8" stroke-width="1.5"/>
<text x="1197.6" y="445.9" font-size="16" fill="#e2e2e2" text-anchor="end" textLength="20.6" lengthAdjust="spacingAndGlyphs">1,2</text>
<line x1="1198.0" y1="398.20000000000005" x2="1815.0" y2="398.20000000000005" stroke="#a8a8a8" stroke-width="1.5"/>
<text x="1197.6" y="403.7" font-size="16" fill="#e2e2e2" text-anchor="end" textLength="20.6" lengthAdjust="spacingAndGlyphs">1,4</text>
<line x1="1198.0" y1="356.0" x2="1815.0" y2="356.0" stroke="#a8a8a8" stroke-width="1.5"/>
<text x="1197.6" y="361.5" font-size="16" fill="#e2e2e2" text-anchor="end" textLength="20.6" lengthAdjust="spacingAndGlyphs">1,6</text>
<line x1="1198.0" y1="313.8" x2="1815.0" y2="313.8" stroke="#a8a8a8" stroke-width="1.5"/>
<text x="1197.6" y="319.3" font-size="16" fill="#e2e2e2" text-anchor="end" textLength="20.6" lengthAdjust="spacingAndGlyphs">1,8</text>
<line x1="1198.0" y1="271.6" x2="1815.0" y2="271.6" stroke="#a8a8a8" stroke-width="1.5"/>
<text x="1197.6" y="277.1" font-size="16" fill="#e2e2e2" text-anchor="end" textLength="8.3" lengthAdjust="spacingAndGlyphs">2</text>
<line x1="1198.0" y1="229.39999999999998" x2="1815.0" y2="229.39999999999998" stroke="#a8a8a8" stroke-width="1.5"/>
<text x="1197.6" y="234.9" font-size="16" fill="#e2e2e2" text-anchor="end" textLength="20.6" lengthAdjust="spacingAndGlyphs">2,2</text>
<line x1="1198.0" y1="187.19999999999993" x2="1815.0" y2="187.19999999999993" stroke="#a8a8a8" stroke-width="1.5"/>
<text x="1197.6" y="192.7" font-size="16" fill="#e2e2e2" text-anchor="end" textLength="20.6" lengthAdjust="spacingAndGlyphs">2,4</text>
<line x1="1205.0" y1="148.3" x2="1815.0" y2="148.3" stroke="#a0a0a0" stroke-width="1.5"/>
<line x1="1815.0" y1="148.3" x2="1815.0" y2="492.7" stroke="#a0a0a0" stroke-width="1.5"/>
<line x1="1205.0" y1="147.60000000000002" x2="1205.0" y2="492.7" stroke="#a0a0a0" stroke-width="1.6"/>
<line x1="1205.0" y1="486.2" x2="1815.0" y2="486.2" stroke="#a0a0a0" stroke-width="1.6"/>
<line x1="1205.0" y1="486.2" x2="1205.0" y2="492.7" stroke="#a0a0a0" stroke-width="1.5"/>
<text x="1205.0" y="509.7" font-size="16" fill="#e2e2e2" text-anchor="middle" textLength="8.3" lengthAdjust="spacingAndGlyphs">0</text>
<line x1="1266.0" y1="486.2" x2="1266.0" y2="492.7" stroke="#a0a0a0" stroke-width="1.5"/>
<text x="1266.0" y="509.7" font-size="16" fill="#e2e2e2" text-anchor="middle" textLength="16.7" lengthAdjust="spacingAndGlyphs">10</text>
<line x1="1327.0" y1="486.2" x2="1327.0" y2="492.7" stroke="#a0a0a0" stroke-width="1.5"/>
<text x="1327.0" y="509.7" font-size="16" fill="#e2e2e2" text-anchor="middle" textLength="16.7" lengthAdjust="spacingAndGlyphs">20</text>
<line x1="1388.0" y1="486.2" x2="1388.0" y2="492.7" stroke="#a0a0a0" stroke-width="1.5"/>
<text x="1388.0" y="509.7" font-size="16" fill="#e2e2e2" text-anchor="middle" textLength="16.7" lengthAdjust="spacingAndGlyphs">30</text>
<line x1="1449.0" y1="486.2" x2="1449.0" y2="492.7" stroke="#a0a0a0" stroke-width="1.5"/>
<text x="1449.0" y="509.7" font-size="16" fill="#e2e2e2" text-anchor="middle" textLength="16.7" lengthAdjust="spacingAndGlyphs">40</text>
<line x1="1510.0" y1="486.2" x2="1510.0" y2="492.7" stroke="#a0a0a0" stroke-width="1.5"/>
<text x="1510.0" y="509.7" font-size="16" fill="#e2e2e2" text-anchor="middle" textLength="16.7" lengthAdjust="spacingAndGlyphs">50</text>
<line x1="1571.0" y1="486.2" x2="1571.0" y2="492.7" stroke="#a0a0a0" stroke-width="1.5"/>
<text x="1571.0" y="509.7" font-size="16" fill="#e2e2e2" text-anchor="middle" textLength="16.7" lengthAdjust="spacingAndGlyphs">60</text>
<line x1="1632.0" y1="486.2" x2="1632.0" y2="492.7" stroke="#a0a0a0" stroke-width="1.5"/>
<text x="1632.0" y="509.7" font-size="16" fill="#e2e2e2" text-anchor="middle" textLength="16.7" lengthAdjust="spacingAndGlyphs">70</text>
<line x1="1693.0" y1="486.2" x2="1693.0" y2="492.7" stroke="#a0a0a0" stroke-width="1.5"/>
<text x="1693.0" y="509.7" font-size="16" fill="#e2e2e2" text-anchor="middle" textLength="16.7" lengthAdjust="spacingAndGlyphs">80</text>
<line x1="1754.0" y1="486.2" x2="1754.0" y2="492.7" stroke="#a0a0a0" stroke-width="1.5"/>
<text x="1754.0" y="509.7" font-size="16" fill="#e2e2e2" text-anchor="middle" textLength="16.7" lengthAdjust="spacingAndGlyphs">90</text>
<line x1="1815.0" y1="486.2" x2="1815.0" y2="492.7" stroke="#a0a0a0" stroke-width="1.5"/>
<text x="1815.0" y="509.7" font-size="16" fill="#e2e2e2" text-anchor="middle" textLength="25.0" lengthAdjust="spacingAndGlyphs">100</text>
<polyline points="1205.0,420.1 1266.0,243.7 1327.0,232.4 1388.0,233.6 1449.0,234.0 1510.0,240.2 1571.0,241.2 1632.0,242.5 1693.0,244.0 1754.0,254.5 1815.0,211.7" fill="none" stroke="#8e8e8e" stroke-width="3" stroke-linejoin="round"/>
<polyline points="1205.0,420.1 1210.5,357.7 1217.2,338.1 1223.3,322.9 1229.4,311.2 1235.5,300.0 1241.6,291.3 1247.7,284.2 1253.8,278.2 1259.9,273.2 1266.0,268.9 1272.1,265.1 1278.2,261.8 1284.3,258.8 1290.4,256.2 1296.5,253.8 1302.6,251.6 1308.7,249.6 1314.8,247.8 1320.9,246.1 1327.0,244.5 1333.1,243.1 1339.2,241.8 1345.3,240.5 1351.4,239.3 1357.5,238.2 1363.6,237.2 1369.7,236.2 1375.8,235.3 1381.9,234.4 1388.0,233.6 1394.1,232.8 1400.2,232.1 1406.3,231.3 1412.4,230.7 1418.5,230.0 1424.6,229.4 1430.7,228.8 1436.8,228.2 1442.9,227.7 1449.0,227.1 1455.1,226.6 1461.2,226.2 1467.3,225.7 1473.4,225.2 1479.5,224.8 1485.6,224.4 1491.7,224.0 1497.8,223.6 1503.9,223.2 1510.0,222.8 1516.1,222.5 1522.2,222.1 1528.3,221.8 1534.4,221.5 1540.5,221.1 1546.6,220.8 1552.7,220.5 1558.8,220.2 1564.9,220.0 1571.0,219.7 1577.1,219.4 1583.2,219.2 1589.3,218.9 1595.4,218.7 1601.5,218.4 1607.6,218.2 1613.7,217.9 1619.8,217.7 1625.9,217.5 1632.0,217.3 1638.1,217.1 1644.2,216.9 1650.3,216.7 1656.4,216.5 1662.5,216.3 1668.6,216.1 1674.7,215.9 1680.8,215.7 1686.9,215.5 1693.0,215.4 1699.1,215.2 1705.2,215.0 1711.3,214.9 1717.4,214.7 1723.5,214.6 1729.6,214.4 1735.7,214.3 1741.8,214.1 1747.9,214.0 1754.0,213.8 1760.1,213.7 1766.2,213.5 1772.3,213.4 1778.4,213.3 1784.5,213.1 1790.6,213.0 1796.7,212.9 1802.8,212.7 1808.9,212.6 1815.0,212.5" fill="none" stroke="#f2f22a" stroke-width="3.6" stroke-linejoin="round"/>
<text x="168.1" y="553.9" font-size="32.5" fill="#f2f2f2" textLength="229.5" lengthAdjust="spacingAndGlyphs" stroke="#f2f2f2" stroke-width="0.35">Avg dE2000: 2,6</text>
<text x="606.0" y="553.8" font-size="32.5" fill="#f2f2f2" textLength="201.5" lengthAdjust="spacingAndGlyphs" stroke="#f2f2f2" stroke-width="0.35">Avg CCT: 6620</text>
<text x="1005.8" y="554.1" font-size="32.5" fill="#f2f2f2" textLength="291.7" lengthAdjust="spacingAndGlyphs" stroke="#f2f2f2" stroke-width="0.35">Contrast Ratio: 1468</text>
<text x="1462.8" y="553.7" font-size="32.5" fill="#f2f2f2" textLength="270.0" lengthAdjust="spacingAndGlyphs" stroke="#f2f2f2" stroke-width="0.35">Total Gamma: 2,14</text>
<rect x="77" y="575" width="1775" height="139.5" fill="#000000"/>
<rect x="359.2" y="581.1" width="106" height="109.2" fill="#f4f4f4"/>
<rect x="361.2" y="583.1" width="102" height="105.2" fill="#020202"/>
<rect x="361.2" y="583.1" width="102" height="52.6" fill="#050507"/>
<text x="412.2" y="705.6" font-size="14" fill="#f4f4f4" text-anchor="middle" textLength="7.2" lengthAdjust="spacingAndGlyphs" stroke="#f4f4f4" stroke-width="0.25">0</text>
<rect x="481.8" y="581.1" width="106" height="109.2" fill="#f4f4f4"/>
<rect x="483.8" y="583.1" width="102" height="105.2" fill="#1b1b1b"/>
<rect x="483.8" y="583.1" width="102" height="52.6" fill="#19191b"/>
<text x="534.8" y="705.6" font-size="14" fill="#f4f4f4" text-anchor="middle" textLength="14.5" lengthAdjust="spacingAndGlyphs" stroke="#f4f4f4" stroke-width="0.25">10</text>
<rect x="604.4" y="581.1" width="106" height="109.2" fill="#f4f4f4"/>
<rect x="606.4" y="583.1" width="102" height="105.2" fill="#333333"/>
<rect x="606.4" y="583.1" width="102" height="52.6" fill="#343436"/>
<text x="657.4" y="705.6" font-size="14" fill="#f4f4f4" text-anchor="middle" textLength="14.5" lengthAdjust="spacingAndGlyphs" stroke="#f4f4f4" stroke-width="0.25">20</text>
<rect x="727.0" y="581.1" width="106" height="109.2" fill="#f4f4f4"/>
<rect x="729.0" y="583.1" width="102" height="105.2" fill="#4f4f4f"/>
<rect x="729.0" y="583.1" width="102" height="52.6" fill="#4f4e51"/>
<text x="780.0" y="705.6" font-size="14" fill="#f4f4f4" text-anchor="middle" textLength="14.5" lengthAdjust="spacingAndGlyphs" stroke="#f4f4f4" stroke-width="0.25">30</text>
<rect x="849.6" y="581.1" width="106" height="109.2" fill="#f4f4f4"/>
<rect x="851.6" y="583.1" width="102" height="105.2" fill="#676767"/>
<rect x="851.6" y="583.1" width="102" height="52.6" fill="#6a696c"/>
<text x="902.6" y="705.6" font-size="14" fill="#f4f4f4" text-anchor="middle" textLength="14.5" lengthAdjust="spacingAndGlyphs" stroke="#f4f4f4" stroke-width="0.25">40</text>
<rect x="972.2" y="581.1" width="106" height="109.2" fill="#f4f4f4"/>
<rect x="974.2" y="583.1" width="102" height="105.2" fill="#848484"/>
<rect x="974.2" y="583.1" width="102" height="52.6" fill="#858487"/>
<text x="1025.2" y="705.6" font-size="14" fill="#f4f4f4" text-anchor="middle" textLength="14.5" lengthAdjust="spacingAndGlyphs" stroke="#f4f4f4" stroke-width="0.25">50</text>
<rect x="1094.8" y="581.1" width="106" height="109.2" fill="#f4f4f4"/>
<rect x="1096.8" y="583.1" width="102" height="105.2" fill="#9b9b9b"/>
<rect x="1096.8" y="583.1" width="102" height="52.6" fill="#9f9ea1"/>
<text x="1147.8" y="705.6" font-size="14" fill="#f4f4f4" text-anchor="middle" textLength="14.5" lengthAdjust="spacingAndGlyphs" stroke="#f4f4f4" stroke-width="0.25">60</text>
<rect x="1217.4" y="581.1" width="106" height="109.2" fill="#f4f4f4"/>
<rect x="1219.4" y="583.1" width="102" height="105.2" fill="#b4b4b4"/>
<rect x="1219.4" y="583.1" width="102" height="52.6" fill="#b8b7ba"/>
<text x="1270.4" y="705.6" font-size="14" fill="#f4f4f4" text-anchor="middle" textLength="14.5" lengthAdjust="spacingAndGlyphs" stroke="#f4f4f4" stroke-width="0.25">70</text>
<rect x="1340.0" y="581.1" width="106" height="109.2" fill="#f4f4f4"/>
<rect x="1342.0" y="583.1" width="102" height="105.2" fill="#cccccc"/>
<rect x="1342.0" y="583.1" width="102" height="52.6" fill="#d0cfd3"/>
<text x="1393.0" y="705.6" font-size="14" fill="#f4f4f4" text-anchor="middle" textLength="14.5" lengthAdjust="spacingAndGlyphs" stroke="#f4f4f4" stroke-width="0.25">80</text>
<rect x="1462.6" y="581.1" width="106" height="109.2" fill="#f4f4f4"/>
<rect x="1464.6" y="583.1" width="102" height="105.2" fill="#e6e6e6"/>
<rect x="1464.6" y="583.1" width="102" height="52.6" fill="#e9e8eb"/>
<text x="1515.6" y="705.6" font-size="14" fill="#f4f4f4" text-anchor="middle" textLength="14.5" lengthAdjust="spacingAndGlyphs" stroke="#f4f4f4" stroke-width="0.25">90</text>
<rect x="1585.2" y="581.1" width="106" height="109.2" fill="#f4f4f4"/>
<rect x="1587.2" y="583.1" width="102" height="105.2" fill="#ffffff"/>
<rect x="1587.2" y="583.1" width="102" height="52.6" fill="#fdfcff"/>
<text x="1638.2" y="705.6" font-size="14" fill="#f4f4f4" text-anchor="middle" textLength="21.8" lengthAdjust="spacingAndGlyphs" stroke="#f4f4f4" stroke-width="0.25">100</text>
<text transform="translate(352,605) rotate(-90)" x="0" y="0" font-size="13.5" fill="#f0f0f0" stroke="#f0f0f0" stroke-width="0.2" text-anchor="middle" textLength="37" lengthAdjust="spacingAndGlyphs">Actual</text>
<text transform="translate(352,666) rotate(-90)" x="0" y="0" font-size="13.5" fill="#f0f0f0" stroke="#f0f0f0" stroke-width="0.2" text-anchor="middle" textLength="36.5" lengthAdjust="spacingAndGlyphs">Target</text>
<text x="91.9" y="770.1" font-size="29.6" fill="#f2f2f2" textLength="232.3" lengthAdjust="spacingAndGlyphs" stroke="#f2f2f2" stroke-width="0.3">Current Reading</text>
<text x="91.5" y="815.5" font-size="25.8" fill="#f2f2f2" textLength="93.5" lengthAdjust="spacingAndGlyphs">x: 0,311</text>
<text x="91.5" y="859.5" font-size="25.8" fill="#f2f2f2" textLength="108.6" lengthAdjust="spacingAndGlyphs">y: 0,3239</text>
<text x="91.5" y="902.1" font-size="25.8" fill="#f2f2f2" textLength="117.3" lengthAdjust="spacingAndGlyphs">fL: 176,89</text>
<text x="91.5" y="945.4" font-size="25.8" fill="#f2f2f2" textLength="168.6" lengthAdjust="spacingAndGlyphs">cd/m&#178;: 606,07</text>
<rect x="424.8" y="737.3" width="311.3" height="228.3" fill="#e4e4e4"/>
<rect x="432.5" y="745.2" width="295.8" height="216.2" fill="#333333"/>
<rect x="472.7" y="748.5" width="252.8" height="182.3" fill="url(#cB)"/>
<rect x="472.7" y="748.5" width="252.8" height="182.3" fill="url(#cM)" mask="url(#mkMid)"/>
<rect x="472.7" y="748.5" width="252.8" height="182.3" fill="url(#cT)" mask="url(#mkTop)"/>
<polyline points="726.7,776.5 720.4,780.3 714.2,784.1 708.2,787.9 702.3,791.6 696.4,795.3 690.8,798.9 685.2,802.5 679.7,806.0 674.4,809.5 669.1,812.9 664.0,816.3 658.9,819.7 654.0,823.0 649.1,826.2 644.3,829.5 639.7,832.6 635.1,835.8 630.6,838.8 626.2,841.9 621.8,844.9 617.6,847.9 613.4,850.8 609.3,853.7 605.3,856.6 601.3,859.4 597.4,862.1 593.6,864.9 589.8,867.6 586.2,870.3 582.5,872.9 579.0,875.5 575.5,878.1 572.0,880.6 568.7,883.1 565.3,885.6 562.1,888.0 558.9,890.4 555.7,892.8 552.6,895.2 549.5,897.5 546.5,899.8 543.6,902.0 540.7,904.2 537.8,906.4 535.0,908.6 532.2,910.8 529.5,912.9 526.8,915.0 524.1,917.0 521.5,919.1 519.0,921.1 516.4,923.1 513.9,925.0 511.5,927.0 509.1,928.9 506.7,930.8 504.3,932.7 502.0,934.5" fill="none" stroke="#000" stroke-width="3" clip-path="url(#cpCie)"/>
<circle cx="594.3" cy="858.3" r="5" fill="#444" stroke="#222" stroke-width="1"/>
<circle cx="580.6" cy="866.6" r="5" fill="#1c1c1c"/>
<circle cx="589.7" cy="858" r="4.8" fill="#ffffff" stroke="#222" stroke-width="1.4"/>
<rect x="590.8" y="831.8" width="14" height="14" fill="#ffffff" stroke="#000" stroke-width="2"/>
<line x1="465" y1="762.2" x2="472.7" y2="762.2" stroke="#cfcfcf" stroke-width="1.2"/>
<text x="464.2" y="767.2" font-size="14.5" fill="#dcdcdc" text-anchor="end" textLength="29.3" lengthAdjust="spacingAndGlyphs">0,35</text>
<line x1="465" y1="799.1" x2="472.7" y2="799.1" stroke="#cfcfcf" stroke-width="1.2"/>
<text x="464.2" y="804.1" font-size="14.5" fill="#dcdcdc" text-anchor="end" textLength="29.3" lengthAdjust="spacingAndGlyphs">0,34</text>
<line x1="465" y1="836.0" x2="472.7" y2="836.0" stroke="#cfcfcf" stroke-width="1.2"/>
<text x="464.2" y="841.0" font-size="14.5" fill="#dcdcdc" text-anchor="end" textLength="29.3" lengthAdjust="spacingAndGlyphs">0,33</text>
<line x1="465" y1="873.0" x2="472.7" y2="873.0" stroke="#cfcfcf" stroke-width="1.2"/>
<text x="464.2" y="878.0" font-size="14.5" fill="#dcdcdc" text-anchor="end" textLength="29.3" lengthAdjust="spacingAndGlyphs">0,32</text>
<line x1="465" y1="909.9" x2="472.7" y2="909.9" stroke="#cfcfcf" stroke-width="1.2"/>
<text x="464.2" y="914.9" font-size="14.5" fill="#dcdcdc" text-anchor="end" textLength="29.3" lengthAdjust="spacingAndGlyphs">0,31</text>
<line x1="482.6" y1="930.8" x2="482.6" y2="936.8" stroke="#cfcfcf" stroke-width="1.2"/>
<text x="482.6" y="954.1" font-size="14.5" fill="#dcdcdc" text-anchor="middle" textLength="29.5" lengthAdjust="spacingAndGlyphs">0,29</text>
<line x1="533.1" y1="930.8" x2="533.1" y2="936.8" stroke="#cfcfcf" stroke-width="1.2"/>
<text x="533.1" y="954.1" font-size="14.5" fill="#dcdcdc" text-anchor="middle" textLength="22.0" lengthAdjust="spacingAndGlyphs">0,3</text>
<line x1="583.6" y1="930.8" x2="583.6" y2="936.8" stroke="#cfcfcf" stroke-width="1.2"/>
<text x="583.6" y="954.1" font-size="14.5" fill="#dcdcdc" text-anchor="middle" textLength="29.5" lengthAdjust="spacingAndGlyphs">0,31</text>
<line x1="634.1" y1="930.8" x2="634.1" y2="936.8" stroke="#cfcfcf" stroke-width="1.2"/>
<text x="634.1" y="954.1" font-size="14.5" fill="#dcdcdc" text-anchor="middle" textLength="29.5" lengthAdjust="spacingAndGlyphs">0,32</text>
<line x1="684.6" y1="930.8" x2="684.6" y2="936.8" stroke="#cfcfcf" stroke-width="1.2"/>
<text x="684.6" y="954.1" font-size="14.5" fill="#dcdcdc" text-anchor="middle" textLength="29.5" lengthAdjust="spacingAndGlyphs">0,33</text>
<rect x="745.0" y="724.6" width="14" height="29.6" fill="#000000"/>
<rect x="759" y="724.6" width="919.5" height="29.6" fill="url(#gHdr)"/>
<text x="902.2" y="745.1" font-size="16" fill="#f4f4f4" stroke="#f4f4f4" stroke-width="0.45" textLength="9.0" lengthAdjust="spacingAndGlyphs">0</text>
<text x="982.2" y="745.1" font-size="16" fill="#f4f4f4" stroke="#f4f4f4" stroke-width="0.45" textLength="18.0" lengthAdjust="spacingAndGlyphs">10</text>
<text x="1052.2" y="745.1" font-size="16" fill="#f4f4f4" stroke="#f4f4f4" stroke-width="0.45" textLength="18.0" lengthAdjust="spacingAndGlyphs">20</text>
<text x="1122.2" y="745.1" font-size="16" fill="#f4f4f4" stroke="#f4f4f4" stroke-width="0.45" textLength="18.0" lengthAdjust="spacingAndGlyphs">30</text>
<text x="1192.2" y="745.1" font-size="16" fill="#f4f4f4" stroke="#f4f4f4" stroke-width="0.45" textLength="18.0" lengthAdjust="spacingAndGlyphs">40</text>
<text x="1262.2" y="745.1" font-size="16" fill="#f4f4f4" stroke="#f4f4f4" stroke-width="0.45" textLength="18.0" lengthAdjust="spacingAndGlyphs">50</text>
<text x="1332.2" y="745.1" font-size="16" fill="#f4f4f4" stroke="#f4f4f4" stroke-width="0.45" textLength="18.0" lengthAdjust="spacingAndGlyphs">60</text>
<text x="1402.2" y="745.1" font-size="16" fill="#f4f4f4" stroke="#f4f4f4" stroke-width="0.45" textLength="18.0" lengthAdjust="spacingAndGlyphs">70</text>
<text x="1472.2" y="745.1" font-size="16" fill="#f4f4f4" stroke="#f4f4f4" stroke-width="0.45" textLength="18.0" lengthAdjust="spacingAndGlyphs">80</text>
<text x="1542.2" y="745.1" font-size="16" fill="#f4f4f4" stroke="#f4f4f4" stroke-width="0.45" textLength="18.0" lengthAdjust="spacingAndGlyphs">90</text>
<text x="1612.2" y="745.1" font-size="16" fill="#f4f4f4" stroke="#f4f4f4" stroke-width="0.45" textLength="27.0" lengthAdjust="spacingAndGlyphs">100</text>
<rect x="745.0" y="754.2" width="14" height="27.73" fill="url(#gRH)"/>
<rect x="759" y="754.2" width="919.5" height="27.73" fill="#3c3c3c"/>
<text x="763.8" y="774.5" font-size="16.6" fill="#f2f2f2" textLength="65.6" lengthAdjust="spacingAndGlyphs">x: CIE31</text>
<text x="902.2" y="774.5" font-size="16.6" fill="#f2f2f2" textLength="31.9" lengthAdjust="spacingAndGlyphs">0,26</text>
<text x="982.2" y="774.5" font-size="16.6" fill="#f2f2f2" textLength="31.9" lengthAdjust="spacingAndGlyphs">0,31</text>
<text x="1052.2" y="774.5" font-size="16.6" fill="#f2f2f2" textLength="31.9" lengthAdjust="spacingAndGlyphs">0,31</text>
<text x="1122.2" y="774.5" font-size="16.6" fill="#f2f2f2" textLength="31.9" lengthAdjust="spacingAndGlyphs">0,31</text>
<text x="1192.2" y="774.5" font-size="16.6" fill="#f2f2f2" textLength="31.9" lengthAdjust="spacingAndGlyphs">0,31</text>
<text x="1262.2" y="774.5" font-size="16.6" fill="#f2f2f2" textLength="31.9" lengthAdjust="spacingAndGlyphs">0,31</text>
<text x="1332.2" y="774.5" font-size="16.6" fill="#f2f2f2" textLength="31.9" lengthAdjust="spacingAndGlyphs">0,31</text>
<text x="1402.2" y="774.5" font-size="16.6" fill="#f2f2f2" textLength="31.9" lengthAdjust="spacingAndGlyphs">0,31</text>
<text x="1472.2" y="774.5" font-size="16.6" fill="#f2f2f2" textLength="31.9" lengthAdjust="spacingAndGlyphs">0,31</text>
<text x="1542.2" y="774.5" font-size="16.6" fill="#f2f2f2" textLength="31.9" lengthAdjust="spacingAndGlyphs">0,31</text>
<text x="1612.2" y="774.5" font-size="16.6" fill="#f2f2f2" textLength="31.9" lengthAdjust="spacingAndGlyphs">0,31</text>
<rect x="745.0" y="781.63" width="14" height="27.73" fill="url(#gRH)"/>
<rect x="759" y="781.63" width="919.5" height="27.73" fill="#878787"/>
<text x="763.8" y="801.9" font-size="16.6" fill="#f2f2f2" textLength="65.6" lengthAdjust="spacingAndGlyphs">y: CIE31</text>
<text x="902.2" y="801.9" font-size="16.6" fill="#f2f2f2" textLength="31.9" lengthAdjust="spacingAndGlyphs">0,26</text>
<text x="982.2" y="801.9" font-size="16.6" fill="#f2f2f2" textLength="31.9" lengthAdjust="spacingAndGlyphs">0,32</text>
<text x="1052.2" y="801.9" font-size="16.6" fill="#f2f2f2" textLength="31.9" lengthAdjust="spacingAndGlyphs">0,32</text>
<text x="1122.2" y="801.9" font-size="16.6" fill="#f2f2f2" textLength="31.9" lengthAdjust="spacingAndGlyphs">0,32</text>
<text x="1192.2" y="801.9" font-size="16.6" fill="#f2f2f2" textLength="31.9" lengthAdjust="spacingAndGlyphs">0,32</text>
<text x="1262.2" y="801.9" font-size="16.6" fill="#f2f2f2" textLength="31.9" lengthAdjust="spacingAndGlyphs">0,32</text>
<text x="1332.2" y="801.9" font-size="16.6" fill="#f2f2f2" textLength="31.9" lengthAdjust="spacingAndGlyphs">0,32</text>
<text x="1402.2" y="801.9" font-size="16.6" fill="#f2f2f2" textLength="31.9" lengthAdjust="spacingAndGlyphs">0,32</text>
<text x="1472.2" y="801.9" font-size="16.6" fill="#f2f2f2" textLength="31.9" lengthAdjust="spacingAndGlyphs">0,32</text>
<text x="1542.2" y="801.9" font-size="16.6" fill="#f2f2f2" textLength="31.9" lengthAdjust="spacingAndGlyphs">0,32</text>
<text x="1612.2" y="801.9" font-size="16.6" fill="#f2f2f2" textLength="31.9" lengthAdjust="spacingAndGlyphs">0,32</text>
<rect x="745.0" y="809.06" width="14" height="27.73" fill="url(#gRH)"/>
<rect x="759" y="809.06" width="919.5" height="27.73" fill="#3c3c3c"/>
<text x="763.8" y="829.4" font-size="16.6" fill="#f2f2f2" textLength="11.4" lengthAdjust="spacingAndGlyphs">Y</text>
<text x="902.2" y="829.4" font-size="16.6" fill="#f2f2f2" textLength="31.9" lengthAdjust="spacingAndGlyphs">0,41</text>
<text x="982.2" y="829.4" font-size="16.6" fill="#f2f2f2" textLength="31.9" lengthAdjust="spacingAndGlyphs">4,78</text>
<text x="1052.2" y="829.4" font-size="16.6" fill="#f2f2f2" textLength="41.0" lengthAdjust="spacingAndGlyphs">18,30</text>
<text x="1122.2" y="829.4" font-size="16.6" fill="#f2f2f2" textLength="41.0" lengthAdjust="spacingAndGlyphs">43,65</text>
<text x="1192.2" y="829.4" font-size="16.6" fill="#f2f2f2" textLength="41.0" lengthAdjust="spacingAndGlyphs">83,09</text>
<text x="1262.2" y="829.4" font-size="16.6" fill="#f2f2f2" textLength="50.2" lengthAdjust="spacingAndGlyphs">138,59</text>
<text x="1332.2" y="829.4" font-size="16.6" fill="#f2f2f2" textLength="50.2" lengthAdjust="spacingAndGlyphs">203,89</text>
<text x="1402.2" y="829.4" font-size="16.6" fill="#f2f2f2" textLength="50.2" lengthAdjust="spacingAndGlyphs">282,21</text>
<text x="1472.2" y="829.4" font-size="16.6" fill="#f2f2f2" textLength="50.2" lengthAdjust="spacingAndGlyphs">377,72</text>
<text x="1542.2" y="829.4" font-size="16.6" fill="#f2f2f2" textLength="50.2" lengthAdjust="spacingAndGlyphs">489,44</text>
<text x="1612.2" y="829.4" font-size="16.6" fill="#f2f2f2" textLength="50.2" lengthAdjust="spacingAndGlyphs">606,07</text>
<rect x="745.0" y="836.49" width="14" height="27.73" fill="url(#gRH)"/>
<rect x="759" y="836.49" width="919.5" height="27.73" fill="#878787"/>
<text x="763.8" y="856.8" font-size="16.6" fill="#f2f2f2" textLength="65.6" lengthAdjust="spacingAndGlyphs">Target Y</text>
<text x="902.2" y="856.8" font-size="16.6" fill="#f2f2f2" textLength="31.9" lengthAdjust="spacingAndGlyphs">0,00</text>
<text x="982.2" y="856.8" font-size="16.6" fill="#f2f2f2" textLength="31.9" lengthAdjust="spacingAndGlyphs">6,26</text>
<text x="1052.2" y="856.8" font-size="16.6" fill="#f2f2f2" textLength="41.0" lengthAdjust="spacingAndGlyphs">20,06</text>
<text x="1122.2" y="856.8" font-size="16.6" fill="#f2f2f2" textLength="41.0" lengthAdjust="spacingAndGlyphs">43,80</text>
<text x="1192.2" y="856.8" font-size="16.6" fill="#f2f2f2" textLength="41.0" lengthAdjust="spacingAndGlyphs">80,53</text>
<text x="1262.2" y="856.8" font-size="16.6" fill="#f2f2f2" textLength="50.2" lengthAdjust="spacingAndGlyphs">130,83</text>
<text x="1332.2" y="856.8" font-size="16.6" fill="#f2f2f2" textLength="50.2" lengthAdjust="spacingAndGlyphs">193,06</text>
<text x="1402.2" y="856.8" font-size="16.6" fill="#f2f2f2" textLength="50.2" lengthAdjust="spacingAndGlyphs">269,82</text>
<text x="1472.2" y="856.8" font-size="16.6" fill="#f2f2f2" textLength="50.2" lengthAdjust="spacingAndGlyphs">365,96</text>
<text x="1542.2" y="856.8" font-size="16.6" fill="#f2f2f2" textLength="50.2" lengthAdjust="spacingAndGlyphs">479,58</text>
<text x="1612.2" y="856.8" font-size="16.6" fill="#f2f2f2" textLength="50.2" lengthAdjust="spacingAndGlyphs">606,07</text>
<rect x="745.0" y="863.92" width="14" height="27.73" fill="url(#gRH)"/>
<rect x="759" y="863.92" width="919.5" height="27.73" fill="#3c3c3c"/>
<text x="763.8" y="884.2" font-size="16.6" fill="#f2f2f2" textLength="127.4" lengthAdjust="spacingAndGlyphs">Gamma Log/Log</text>
<text x="902.2" y="884.2" font-size="16.6" fill="#f2f2f2" textLength="31.9" lengthAdjust="spacingAndGlyphs">1,28</text>
<text x="982.2" y="884.2" font-size="16.6" fill="#f2f2f2" textLength="31.9" lengthAdjust="spacingAndGlyphs">2,12</text>
<text x="1052.2" y="884.2" font-size="16.6" fill="#f2f2f2" textLength="31.9" lengthAdjust="spacingAndGlyphs">2,17</text>
<text x="1122.2" y="884.2" font-size="16.6" fill="#f2f2f2" textLength="31.9" lengthAdjust="spacingAndGlyphs">2,17</text>
<text x="1192.2" y="884.2" font-size="16.6" fill="#f2f2f2" textLength="31.9" lengthAdjust="spacingAndGlyphs">2,17</text>
<text x="1262.2" y="884.2" font-size="16.6" fill="#f2f2f2" textLength="31.9" lengthAdjust="spacingAndGlyphs">2,14</text>
<text x="1332.2" y="884.2" font-size="16.6" fill="#f2f2f2" textLength="31.9" lengthAdjust="spacingAndGlyphs">2,13</text>
<text x="1402.2" y="884.2" font-size="16.6" fill="#f2f2f2" textLength="31.9" lengthAdjust="spacingAndGlyphs">2,13</text>
<text x="1472.2" y="884.2" font-size="16.6" fill="#f2f2f2" textLength="31.9" lengthAdjust="spacingAndGlyphs">2,12</text>
<text x="1542.2" y="884.2" font-size="16.6" fill="#f2f2f2" textLength="31.9" lengthAdjust="spacingAndGlyphs">2,07</text>
<text x="1612.2" y="884.2" font-size="16.6" fill="#f2f2f2" textLength="31.9" lengthAdjust="spacingAndGlyphs">2,27</text>
<rect x="745.0" y="891.35" width="14" height="27.73" fill="url(#gRH)"/>
<rect x="759" y="891.35" width="919.5" height="27.73" fill="#878787"/>
<text x="763.8" y="911.6" font-size="16.6" fill="#f2f2f2" textLength="35.1" lengthAdjust="spacingAndGlyphs">CCT</text>
<text x="902.2" y="911.6" font-size="16.6" fill="#f2f2f2" textLength="68.4" lengthAdjust="spacingAndGlyphs">15909,00</text>
<text x="982.2" y="911.6" font-size="16.6" fill="#f2f2f2" textLength="59.3" lengthAdjust="spacingAndGlyphs">6761,00</text>
<text x="1052.2" y="911.6" font-size="16.6" fill="#f2f2f2" textLength="59.3" lengthAdjust="spacingAndGlyphs">6591,00</text>
<text x="1122.2" y="911.6" font-size="16.6" fill="#f2f2f2" textLength="59.3" lengthAdjust="spacingAndGlyphs">6591,00</text>
<text x="1192.2" y="911.6" font-size="16.6" fill="#f2f2f2" textLength="59.3" lengthAdjust="spacingAndGlyphs">6593,00</text>
<text x="1262.2" y="911.6" font-size="16.6" fill="#f2f2f2" textLength="59.3" lengthAdjust="spacingAndGlyphs">6595,00</text>
<text x="1332.2" y="911.6" font-size="16.6" fill="#f2f2f2" textLength="59.3" lengthAdjust="spacingAndGlyphs">6596,00</text>
<text x="1402.2" y="911.6" font-size="16.6" fill="#f2f2f2" textLength="59.3" lengthAdjust="spacingAndGlyphs">6600,00</text>
<text x="1472.2" y="911.6" font-size="16.6" fill="#f2f2f2" textLength="59.3" lengthAdjust="spacingAndGlyphs">6611,00</text>
<text x="1542.2" y="911.6" font-size="16.6" fill="#f2f2f2" textLength="59.3" lengthAdjust="spacingAndGlyphs">6626,00</text>
<text x="1612.2" y="911.6" font-size="16.6" fill="#f2f2f2" textLength="59.3" lengthAdjust="spacingAndGlyphs">6641,00</text>
<rect x="745.0" y="918.78" width="14" height="27.73" fill="url(#gRH)"/>
<rect x="759" y="918.78" width="919.5" height="27.73" fill="#3c3c3c"/>
<text x="763.8" y="939.1" font-size="16.6" fill="#f2f2f2" textLength="65.6" lengthAdjust="spacingAndGlyphs">&#916;E 2000</text>
<text x="902.2" y="939.1" font-size="16.6" fill="#f2f2f2" textLength="31.9" lengthAdjust="spacingAndGlyphs">0,79</text>
<text x="982.2" y="939.1" font-size="16.6" fill="#f2f2f2" textLength="31.9" lengthAdjust="spacingAndGlyphs">1,59</text>
<text x="1052.2" y="939.1" font-size="16.6" fill="#f2f2f2" textLength="31.9" lengthAdjust="spacingAndGlyphs">1,43</text>
<text x="1122.2" y="939.1" font-size="16.6" fill="#f2f2f2" textLength="31.9" lengthAdjust="spacingAndGlyphs">1,87</text>
<text x="1192.2" y="939.1" font-size="16.6" fill="#f2f2f2" textLength="31.9" lengthAdjust="spacingAndGlyphs">2,41</text>
<text x="1262.2" y="939.1" font-size="16.6" fill="#f2f2f2" textLength="31.9" lengthAdjust="spacingAndGlyphs">2,97</text>
<text x="1332.2" y="939.1" font-size="16.6" fill="#f2f2f2" textLength="31.9" lengthAdjust="spacingAndGlyphs">3,15</text>
<text x="1402.2" y="939.1" font-size="16.6" fill="#f2f2f2" textLength="31.9" lengthAdjust="spacingAndGlyphs">3,19</text>
<text x="1472.2" y="939.1" font-size="16.6" fill="#f2f2f2" textLength="31.9" lengthAdjust="spacingAndGlyphs">3,14</text>
<text x="1542.2" y="939.1" font-size="16.6" fill="#f2f2f2" textLength="31.9" lengthAdjust="spacingAndGlyphs">3,14</text>
<text x="1612.2" y="939.1" font-size="16.6" fill="#f2f2f2" textLength="31.9" lengthAdjust="spacingAndGlyphs">3,19</text>
<rect x="0" y="966.5" width="1920" height="72.5" fill="#2a2a2a"/>
<rect x="1.2" y="969" width="139.5" height="68.5" rx="4" fill="url(#gBtn)" stroke="#3a3a3a" stroke-width="0.8"/>
<rect x="7.2" y="975" width="127.5" height="39.8" rx="4" fill="#000000" stroke="#000000" stroke-width="1"/>
<text x="71.2" y="1032.6" font-size="11" fill="#262626" text-anchor="middle" textLength="6.7" lengthAdjust="spacingAndGlyphs" font-weight="bold">0</text>
<rect x="143.1" y="969" width="139.5" height="68.5" rx="4" fill="url(#gBtn)" stroke="#3a3a3a" stroke-width="0.8"/>
<rect x="149.1" y="975" width="127.5" height="39.8" rx="4" fill="#1b1b1b" stroke="#161616" stroke-width="1"/>
<text x="213.1" y="1032.6" font-size="11" fill="#262626" text-anchor="middle" textLength="13.4" lengthAdjust="spacingAndGlyphs" font-weight="bold">10</text>
<rect x="285.0" y="969" width="139.5" height="68.5" rx="4" fill="url(#gBtn)" stroke="#3a3a3a" stroke-width="0.8"/>
<rect x="291.0" y="975" width="127.5" height="39.8" rx="4" fill="#333333" stroke="#292929" stroke-width="1"/>
<text x="355.0" y="1032.6" font-size="11" fill="#262626" text-anchor="middle" textLength="13.4" lengthAdjust="spacingAndGlyphs" font-weight="bold">20</text>
<rect x="426.9" y="969" width="139.5" height="68.5" rx="4" fill="url(#gBtn)" stroke="#3a3a3a" stroke-width="0.8"/>
<rect x="432.9" y="975" width="127.5" height="39.8" rx="4" fill="#4f4f4f" stroke="#3f3f3f" stroke-width="1"/>
<text x="496.9" y="1032.6" font-size="11" fill="#262626" text-anchor="middle" textLength="13.4" lengthAdjust="spacingAndGlyphs" font-weight="bold">30</text>
<rect x="568.8" y="969" width="139.5" height="68.5" rx="4" fill="url(#gBtn)" stroke="#3a3a3a" stroke-width="0.8"/>
<rect x="574.8" y="975" width="127.5" height="39.8" rx="4" fill="#676767" stroke="#525252" stroke-width="1"/>
<text x="638.8" y="1032.6" font-size="11" fill="#262626" text-anchor="middle" textLength="13.4" lengthAdjust="spacingAndGlyphs" font-weight="bold">40</text>
<rect x="710.7" y="969" width="139.5" height="68.5" rx="4" fill="url(#gBtn)" stroke="#3a3a3a" stroke-width="0.8"/>
<rect x="716.7" y="975" width="127.5" height="39.8" rx="4" fill="#848484" stroke="#6a6a6a" stroke-width="1"/>
<text x="780.7" y="1032.6" font-size="11" fill="#262626" text-anchor="middle" textLength="13.4" lengthAdjust="spacingAndGlyphs" font-weight="bold">50</text>
<rect x="852.6" y="969" width="139.5" height="68.5" rx="4" fill="url(#gBtn)" stroke="#3a3a3a" stroke-width="0.8"/>
<rect x="858.6" y="975" width="127.5" height="39.8" rx="4" fill="#9b9b9b" stroke="#7c7c7c" stroke-width="1"/>
<text x="922.6" y="1032.6" font-size="11" fill="#262626" text-anchor="middle" textLength="13.4" lengthAdjust="spacingAndGlyphs" font-weight="bold">60</text>
<rect x="994.5" y="969" width="139.5" height="68.5" rx="4" fill="url(#gBtn)" stroke="#3a3a3a" stroke-width="0.8"/>
<rect x="1000.5" y="975" width="127.5" height="39.8" rx="4" fill="#b4b4b4" stroke="#909090" stroke-width="1"/>
<text x="1064.5" y="1032.6" font-size="11" fill="#262626" text-anchor="middle" textLength="13.4" lengthAdjust="spacingAndGlyphs" font-weight="bold">70</text>
<rect x="1136.4" y="969" width="139.5" height="68.5" rx="4" fill="url(#gBtn)" stroke="#3a3a3a" stroke-width="0.8"/>
<rect x="1142.4" y="975" width="127.5" height="39.8" rx="4" fill="#cccccc" stroke="#a3a3a3" stroke-width="1"/>
<text x="1206.4" y="1032.6" font-size="11" fill="#262626" text-anchor="middle" textLength="13.4" lengthAdjust="spacingAndGlyphs" font-weight="bold">80</text>
<rect x="1278.3" y="969" width="139.5" height="68.5" rx="4" fill="url(#gBtn)" stroke="#3a3a3a" stroke-width="0.8"/>
<rect x="1284.3" y="975" width="127.5" height="39.8" rx="4" fill="#e6e6e6" stroke="#b8b8b8" stroke-width="1"/>
<text x="1348.3" y="1032.6" font-size="11" fill="#262626" text-anchor="middle" textLength="13.4" lengthAdjust="spacingAndGlyphs" font-weight="bold">90</text>
<rect x="1420" y="969" width="140" height="68.5" rx="4" fill="#2b2b2b"/>
<rect x="1426" y="974.6" width="128.8" height="40.6" rx="4" fill="#ffffff"/>
<text x="1490.0" y="1032.8" font-size="11.5" fill="#ffffff" text-anchor="middle" textLength="21.0" lengthAdjust="spacingAndGlyphs" font-weight="bold">100</text>
<rect x="1563.2" y="969" width="54" height="20.5" rx="3" fill="url(#gCtl)"/>
<rect x="1563.2" y="990.7" width="54" height="46.5" rx="3" fill="url(#gCtl)"/>
<circle cx="1590.2" cy="978.6" r="8.5" fill="url(#gIco)"/>
<path d="M1586 980.8 L1590.7 976.4 L1595.4 980.8 Z" fill="#2a2a2a"/>
<rect x="1574.2" y="997.6" width="32" height="32" rx="4" fill="#a8a8a8" stroke="#1a1a1a" stroke-width="2.2"/>
<rect x="1575.3" y="1013.5" width="29.8" height="15" rx="3" fill="#8a8a8a"/>
<rect x="1582.9" y="1006.5" width="15.2" height="15" fill="#000"/>
<rect x="1582.9" y="1006.5" width="15.2" height="7.5" fill="#2a2a2a"/>
<rect x="1618.9" y="969" width="51.7" height="33.5" fill="url(#gCtl)"/>
<line x1="1671.1" y1="969" x2="1671.1" y2="1002.5" stroke="#2c2c2c" stroke-width="1"/>
<rect x="1671.6" y="969" width="50.0" height="33.5" fill="url(#gCtl)"/>
<line x1="1722.1" y1="969" x2="1722.1" y2="1002.5" stroke="#2c2c2c" stroke-width="1"/>
<rect x="1722.6" y="969" width="49.8" height="33.5" fill="url(#gCtl)"/>
<line x1="1772.9" y1="969" x2="1772.9" y2="1002.5" stroke="#2c2c2c" stroke-width="1"/>
<rect x="1772.6" y="969" width="50.7" height="33.5" fill="url(#gCtl)"/>
<line x1="1823.8" y1="969" x2="1823.8" y2="1002.5" stroke="#2c2c2c" stroke-width="1"/>
<rect x="1823.5" y="969" width="50.7" height="33.5" fill="url(#gCtl)"/>
<line x1="1874.7" y1="969" x2="1874.7" y2="1002.5" stroke="#2c2c2c" stroke-width="1"/>
<rect x="1874.6" y="969" width="45.4" height="33.8" fill="#383838"/>
<circle cx="1900.8" cy="986.2" r="11" fill="#2e2e2e"/>
<circle cx="1644.8" cy="986" r="11" fill="url(#gIco)"/>
<circle cx="1696.6" cy="986" r="11" fill="url(#gIco)"/>
<circle cx="1747.5" cy="986" r="11" fill="url(#gIco)"/>
<circle cx="1797.9" cy="986" r="11" fill="url(#gIco)"/>
<circle cx="1848.8" cy="986" r="11" fill="url(#gIco)"/>
<rect x="1640.3" y="981.9" width="8.8" height="8.4" fill="#2a2a2a"/>
<path d="M1693.3 981.3 L1702.7 986.6 L1693.3 991.9 Z" fill="#2a2a2a"/>
<path d="M1743 980.5 H1741 V991.5 H1743 M1751.5 980.5 H1753.5 V991.5 H1751.5" fill="none" stroke="#2a2a2a" stroke-width="1.8"/>
<circle cx="1745.6" cy="986" r="1" fill="#2a2a2a"/><circle cx="1748.8" cy="986" r="1" fill="#2a2a2a"/>
<path d="M1797.9 986 C1795 982.2 1790.6 982.6 1790.6 986 C1790.6 989.4 1795 989.8 1797.9 986 C1800.8 982.2 1805.2 982.6 1805.2 986 C1805.2 989.4 1800.8 989.8 1797.9 986 Z" fill="none" stroke="#2a2a2a" stroke-width="1.8"/>
<path d="M1843.5 985 A6 6 0 0 1 1853.6 981.6 M1854.9 987 A6 6 0 0 1 1844.8 990.4" fill="none" stroke="#2a2a2a" stroke-width="2"/>
<path d="M1855.6 979 L1855.8 984.6 L1850.6 983.2 Z M1842.8 993 L1842.6 987.4 L1847.8 988.8 Z" fill="#2a2a2a"/>
<rect x="1618.9" y="1004.2" width="152.9" height="33" rx="3" fill="url(#gCtl)"/>
<rect x="1772.6" y="1004.2" width="160" height="33" rx="3" fill="url(#gCtl)"/>
<line x1="1772.3" y1="1004" x2="1772.3" y2="1038" stroke="#2c2c2c" stroke-width="1"/>
<circle cx="1653.4" cy="1020.6" r="11" fill="url(#gIco)"/>
<circle cx="1894.2" cy="1020.8" r="11" fill="url(#gIco)"/>
<path d="M1652 1015.5 L1647.5 1020.6 L1652 1025.7 M1657 1015.5 L1652.5 1020.6 L1657 1025.7" fill="none" stroke="#2a2a2a" stroke-width="1.7"/>
<path d="M1891 1015.7 L1895.5 1020.8 L1891 1025.9 M1896 1015.7 L1900.5 1020.8 L1896 1025.9" fill="none" stroke="#2a2a2a" stroke-width="1.7"/>
<text x="1684.5" y="1029.7" font-size="24.5" fill="#2e2e2e" textLength="56.3" lengthAdjust="spacingAndGlyphs" stroke="#2e2e2e" stroke-width="0.8">Back</text>
<text x="1805.0" y="1029.9" font-size="24.5" fill="#2e2e2e" textLength="57.5" lengthAdjust="spacingAndGlyphs" stroke="#2e2e2e" stroke-width="0.8">Next</text></svg></body></html>
